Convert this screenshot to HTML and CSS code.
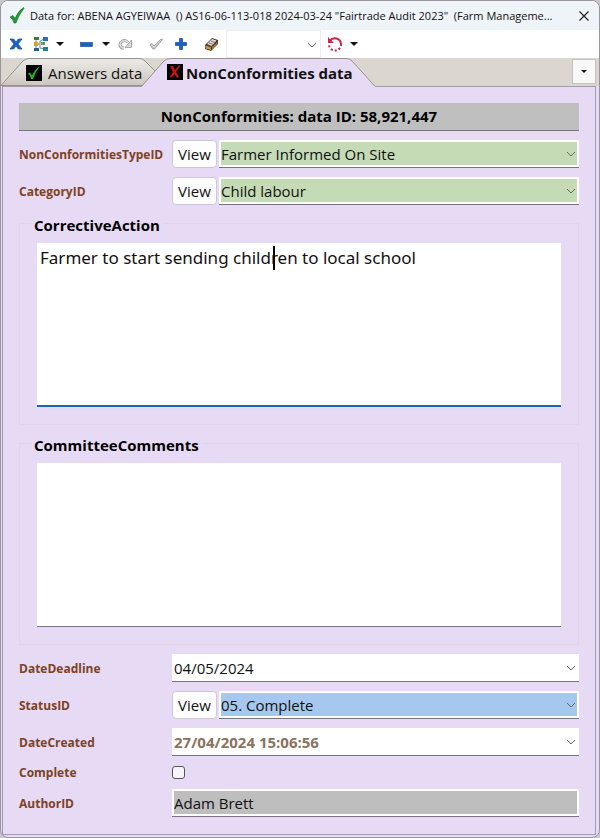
FILE: index.html
```html
<!DOCTYPE html>
<html lang="en">
<head>
  <meta charset="UTF-8" />
  <meta name="viewport" content="width=device-width, initial-scale=1" />
  <title>Data for: ABENA AGYEIWAA</title>
  <link rel="stylesheet" href="styles.css">
</head>
<body>
  <div class="window">

    <header class="titlebar">
      <svg class="title-icon" width="16" height="17" viewBox="0 0 16 17"><path d="M1 10 L4 8.500 L6 11.500 Q9 4 14.500 0.500 L15 1.500 Q10 7 7 16 L5 16 Q4 12 1 10Z" fill="#1f9a35" stroke="#0d6b20" stroke-width=".6"/></svg>
      <h1>Data for: ABENA AGYEIWAA &nbsp;() AS16-06-113-018 2024-03-24 "Fairtrade Audit 2023" &nbsp;(Farm Manageme...</h1>
      <button class="close-btn" aria-label="Close">
        <svg width="10" height="10" viewBox="0 0 10 10"><path d="M.5 .5 L9.500 9.500 M9.500 .5 L.5 9.500" stroke="#222" stroke-width="1.200"/></svg>
      </button>
    </header>

    <div class="toolbar">
      <button class="tool" aria-label="Cancel">
        <svg width="14" height="12" viewBox="0 0 14 12"><path d="M1 1 H4.500 L7 4 L9.500 1 H13 L9 6 L13 11 H9.500 L7 8 L4.500 11 H1 L5 6Z" fill="#1a62c8" stroke="#0d4596" stroke-width=".7"/></svg>
      </button>
      <button class="tool tool-split" aria-label="Structure">
        <svg width="16" height="16" viewBox="0 0 16 16">
          <path d="M3 3 V13 M5 8 H7 M11 3 L7 5 V12 L11 13" fill="none" stroke="#6c8fae" stroke-width="1"/>
          <rect x="1" y="1" width="5" height="3" fill="#3f7a3c"/><rect x="10" y="1" width="5" height="4" fill="#2d6fb0"/>
          <rect x="1" y="6" width="4" height="4" fill="#d9a520"/><rect x="8" y="6" width="4" height="3" fill="#6f9f58"/>
          <rect x="1" y="12" width="5" height="3" fill="#2d5f80"/><rect x="10" y="11" width="5" height="4" fill="#2b7f86"/>
        </svg>
        <span class="arrow"></span>
      </button>
      <button class="tool tool-split tool-minus" aria-label="Remove">
        <svg width="13" height="5" viewBox="0 0 13 5"><rect x=".5" y=".5" width="12" height="4" fill="#1a62c8" stroke="#0d4596" stroke-width=".6"/></svg>
        <span class="arrow"></span>
      </button>
      <button class="tool tool-redo" aria-label="Redo">
        <svg width="15" height="12" viewBox="0 0 15 12"><path d="M6 10 H4.500 A3.500 3.500 0 0 1 4 3.500 Q7 1 10 4.500" fill="none" stroke="#999" stroke-width="3"/><path d="M6 10 H4.500 A3.500 3.500 0 0 1 4 3.500 Q7 1 10 4.500" fill="none" stroke="#e2e2e2" stroke-width="1.400"/><path d="M13.500 2 V9.500 H7Z" fill="#d6d6d6" stroke="#999" stroke-width=".8"/></svg>
      </button>
      <button class="tool tool-check" aria-label="Accept">
        <svg width="14" height="12" viewBox="0 0 14 12"><path d="M1 7 L3 5.500 L5 8 L12 1 L13.500 1.500 L5.500 11 H4Z" fill="#d0d0d0" stroke="#999" stroke-width=".9"/></svg>
      </button>
      <button class="tool" aria-label="Add">
        <svg width="12" height="12" viewBox="0 0 12 12"><path d="M4.500 .5 H7.500 V4.500 H11.500 V7.500 H7.500 V11.500 H4.500 V7.500 H.5 V4.500 H4.500Z" fill="#1a62c8" stroke="#0d4596" stroke-width=".7"/></svg>
      </button>
      <button class="tool tool-eraser" aria-label="Clear">
        <svg width="15" height="15" viewBox="0 0 15 15"><path d="M1 8 L8 1 L14 3 L14 7 L7 14 L1 12Z" fill="#4a3826"/><path d="M3 7 L8 2 L12.500 3.500 L7.500 9Z" fill="#ddd"/><path d="M1.500 8.500 L7 10.200 V13 L1.500 11.500Z" fill="#c98f43"/><path d="M8 10 L13.500 5 V6.500 L8 12.500Z" fill="#b27c3c"/><path d="M5 6 L9.500 7.500 M7 4 L11 5.500" stroke="#777" stroke-width="1"/></svg>
      </button>
      <div class="combo toolbar-combo">
        <select aria-label="Filter"><option></option></select>
        <svg class="chevron" width="10" height="6" viewBox="0 0 10 6"><path d="M1 1 L5 5 L9 1"/></svg>
      </div>
      <button class="tool tool-split tool-refresh" aria-label="Refresh">
        <svg width="16" height="16" viewBox="0 0 16 16"><path d="M3 5 A6 6 0 0 1 14 8" fill="none" stroke="#cc2944" stroke-width="2"/><path d="M14 8 A6 6 0 0 1 2 9" fill="none" stroke="#cc2944" stroke-width="2" stroke-dasharray="2 2"/><path d="M1 1 V7 H7Z" fill="#cc2944"/></svg>
        <span class="arrow"></span>
      </button>
    </div>

    <nav class="tabs">
      <button class="tab tab-answers">
        <svg class="tab-shape" width="155" height="28" viewBox="0 0 155 28">
          <defs><linearGradient id="tabFill" x1="0" y1="0" x2="0" y2="1"><stop offset="0" stop-color="#eceae6"/><stop offset="1" stop-color="#ccc8c0"/></linearGradient></defs>
          <path d="M0 27.500 L21 4 Q24 .5 28 .5 H138 Q142 .5 144 3 L155 14 V27.500Z" fill="url(#tabFill)" stroke="#96938e"/>
        </svg>
        <svg class="tab-icon" width="16" height="16" viewBox="0 0 16 16"><rect width="16" height="16" fill="#000"/><path d="M2 8.500 L4 7.500 L6 10.500 Q9 4 14 1 Q9 7 7 14 H5 Q4 10 2 8.500Z" fill="#20b52c"/></svg>
        <span>Answers data</span>
      </button>
      <button class="tab tab-active">
        <svg class="tab-shape" width="233" height="29" viewBox="0 0 233 29">
          <path d="M0 28 L21 4 Q24 .5 28 .5 H204 Q208 .5 210 3 L230 25 Q231 27.500 233 28 V29 H0Z" fill="#e6daf5"/>
          <path d="M0 28 L21 4 Q24 .5 28 .5 H204 Q208 .5 210 3 L230 25 Q231 27.500 233 27.500" fill="none" stroke="#96938e"/>
        </svg>
        <svg class="tab-icon" width="16" height="16" viewBox="0 0 16 16"><rect width="16" height="16" fill="#000"/><path d="M3 2 L6 2 L8 6 L12 1 L13 2 L9 8 L12 13 L10 14 L7.500 10 L4 14 L3 13 L6 8Z" fill="#c9141c"/></svg>
        <span>NonConformities data</span>
      </button>
      <button class="tab-menu" aria-label="Tab list"><span class="arrow arrow-small"></span></button>
    </nav>

    <main class="panel">
      <h2 class="record-title">NonConformities: data ID: 58,921,447</h2>

      <div class="row">
        <label for="typeId">NonConformitiesTypeID</label>
        <button class="view-btn">View</button>
        <div class="combo field green">
          <select id="typeId"><option>Farmer Informed On Site</option></select>
          <svg class="chevron" width="10" height="6" viewBox="0 0 10 6"><path d="M1 1 L5 5 L9 1"/></svg>
        </div>
      </div>

      <div class="row">
        <label for="categoryId">CategoryID</label>
        <button class="view-btn">View</button>
        <div class="combo field green">
          <select id="categoryId"><option>Child labour</option></select>
          <svg class="chevron" width="10" height="6" viewBox="0 0 10 6"><path d="M1 1 L5 5 L9 1"/></svg>
        </div>
      </div>

      <section class="group">
        <label class="group-title" for="action">CorrectiveAction</label>
        <div class="memo focused">
          <textarea id="action" spellcheck="false">Farmer to start sending children to local school</textarea>
          <span class="caret"></span>
        </div>
      </section>

      <section class="group">
        <label class="group-title" for="comments">CommitteeComments</label>
        <div class="memo">
          <textarea id="comments"></textarea>
        </div>
      </section>

      <div class="row">
        <label for="deadline">DateDeadline</label>
        <div class="combo field">
          <input type="text" id="deadline" value="04/05/2024">
          <svg class="chevron" width="10" height="6" viewBox="0 0 10 6"><path d="M1 1 L5 5 L9 1"/></svg>
        </div>
      </div>

      <div class="row">
        <label for="statusId">StatusID</label>
        <button class="view-btn">View</button>
        <div class="combo field blue">
          <select id="statusId"><option>05. Complete</option></select>
          <svg class="chevron" width="10" height="6" viewBox="0 0 10 6"><path d="M1 1 L5 5 L9 1"/></svg>
        </div>
      </div>

      <div class="row">
        <label for="created">DateCreated</label>
        <div class="combo field created">
          <input type="text" id="created" value="27/04/2024 15:06:56">
          <svg class="chevron" width="10" height="6" viewBox="0 0 10 6"><path d="M1 1 L5 5 L9 1"/></svg>
        </div>
      </div>

      <div class="row row-check">
        <label for="complete">Complete</label>
        <input type="checkbox" id="complete">
      </div>

      <div class="row">
        <label for="author">AuthorID</label>
        <div class="combo field grey">
          <input type="text" id="author" value="Adam Brett" readonly>
        </div>
      </div>
    </main>
  </div>
</body>
</html>
```
FILE: styles.css
```css
* {
  box-sizing: border-box;
}
body {
  margin: 0;
  background: #c9c7cc;
  font-family: "Open Sans", "Noto Sans", sans-serif;
  font-size: 15px;
  color: #111;
}
button, select, input, textarea {
  font: inherit;
  color: inherit;
  margin: 0;
}
button {
  border: none;
  background: none;
  padding: 0;
}
svg {
  display: block;
  flex: none;
}
.window {
  display: flex;
  flex-direction: column;
  min-height: 100vh;
  border: 1px solid #98959c;
  border-radius: 8px;
  overflow: hidden;
  background: #e6daf5;
}

/* Title bar */
.titlebar {
  display: flex;
  align-items: center;
  height: 29px;
  padding: 0 10px 0 8px;
  background: #eff4f9;
}
.titlebar h1 {
  flex: 1;
  min-width: 0;
  margin: 0 0 0 5px;
  font-size: 11px;
  font-weight: 400;
  white-space: nowrap;
  overflow: hidden;
}

/* Toolbar */
.toolbar {
  display: flex;
  align-items: center;
  height: 28px;
  padding-left: 8px;
  background: #fff;
}
.tool {
  display: flex;
  align-items: center;
}
.tool-split {
  gap: 7px;
  margin-left: 10px;
}
.tool-minus {
  gap: 9px;
  margin-left: 16px;
}
.tool-redo {
  margin-left: 8px;
}
.tool-check {
  margin: 0 12px 0 16px;
}
.tool-eraser {
  margin: 0 7px 0 17px;
}
.tool-refresh {
  margin-left: 6px;
}
.arrow {
  border: 4px solid transparent;
  border-top-color: #111;
  border-bottom: none;
}
.arrow-small {
  border-width: 3px;
  border-bottom: none;
}

/* Tabs */
.tabs {
  display: flex;
  height: 28px;
  background: #dbd7d0;
}
.tab {
  position: relative;
  display: flex;
  align-items: center;
  gap: 6px;
  height: 28px;
  padding-top: 2px;
  white-space: nowrap;
}
.tab span, .tab-icon {
  position: relative;
}
.tab-shape {
  position: absolute;
  left: 0;
  top: 0;
}
.tab-answers {
  width: 141px;
  padding-left: 25px;
}
.tab-active {
  z-index: 1;
  width: 233px;
  padding-left: 25px;
  gap: 3px;
  font-weight: 700;
}
.tab-active .tab-icon {
  margin-bottom: 2px;
}
.tab-menu {
  display: flex;
  align-items: center;
  justify-content: center;
  width: 24px;
  height: 25px;
  margin: 1px 3px 0 auto;
  border: 1px solid #c4c2be;
  background: #f8f8f8;
}

/* Form */
.panel {
  flex: 1;
  display: flex;
  flex-direction: column;
  gap: 9px;
  margin: 0 3px 2px 1px;
  padding: 16px 16px 15px;
  border: 1px solid #a29ab0;
}
.record-title {
  margin: 0;
  height: 28px;
  line-height: 27px;
  border-bottom: 1px solid #77747a;
  background: #bfbfbf;
  font-size: 15px;
  font-weight: 700;
  text-align: center;
  color: #000;
}
.row {
  display: flex;
  align-items: center;
  gap: 2px;
  height: 28px;
}
.row > label {
  flex: none;
  width: 151px;
  font-size: 12px;
  font-weight: 700;
  color: #7d4223;
}
.view-btn {
  width: 45px;
  height: 28px;
  border: 1px solid #cfc8d8;
  border-radius: 4px;
  background: #fdfdfd;
}
.combo {
  position: relative;
  height: 28px;
  background: #fff;
}
.combo select, .combo input {
  display: block;
  appearance: none;
  width: 100%;
  height: 100%;
  padding: 0 20px 0 0;
  border: none;
  border-radius: 0;
  outline: none;
  background: transparent;
}
.chevron {
  position: absolute;
  right: 3px;
  top: 11px;
  fill: none;
  stroke: #666;
  pointer-events: none;
}
.toolbar-combo {
  width: 95px;
  height: 28px;
  border: 1px solid #eee;
}
.field {
  flex: 1;
  padding: 2px;
  border-bottom: 1px solid #77747f;
}
.green select {
  background: #c5dbb6;
}
.blue select {
  background: #a6c8ef;
}
.created input {
  font-weight: 700;
  color: #8a735e;
}
.grey input {
  background: #bebebe;
}
.row-check {
  height: 15px;
}
.row-check input {
  appearance: none;
  width: 13px;
  height: 13px;
  border: 1px solid #555;
  border-radius: 3px;
  background: #f6f3f9;
}

/* Memo groups */
.group {
  position: relative;
  height: 202px;
  margin-top: 9px;
  padding: 19px 17px;
  border: 1px solid #dfd6e8;
}
.group-title {
  position: absolute;
  left: 11px;
  top: -9px;
  padding: 0 3px;
  background: #e6daf5;
  font-size: 15px;
  line-height: 20px;
  font-weight: 700;
  color: #000;
}
.memo {
  position: relative;
}
.memo textarea {
  display: block;
  width: 100%;
  height: 164px;
  padding: 3px;
  border: none;
  border-bottom: 1px solid #77747f;
  outline: none;
  resize: none;
  background: #fff;
  font-family: "Noto Sans", sans-serif;
  font-size: 17px;
  line-height: 24px;
}
.focused textarea {
  border-bottom: 2px solid #1f62ad;
}
.caret {
  position: absolute;
  left: 236px;
  top: 3px;
  width: 2px;
  height: 24px;
  background: #000;
}
```
